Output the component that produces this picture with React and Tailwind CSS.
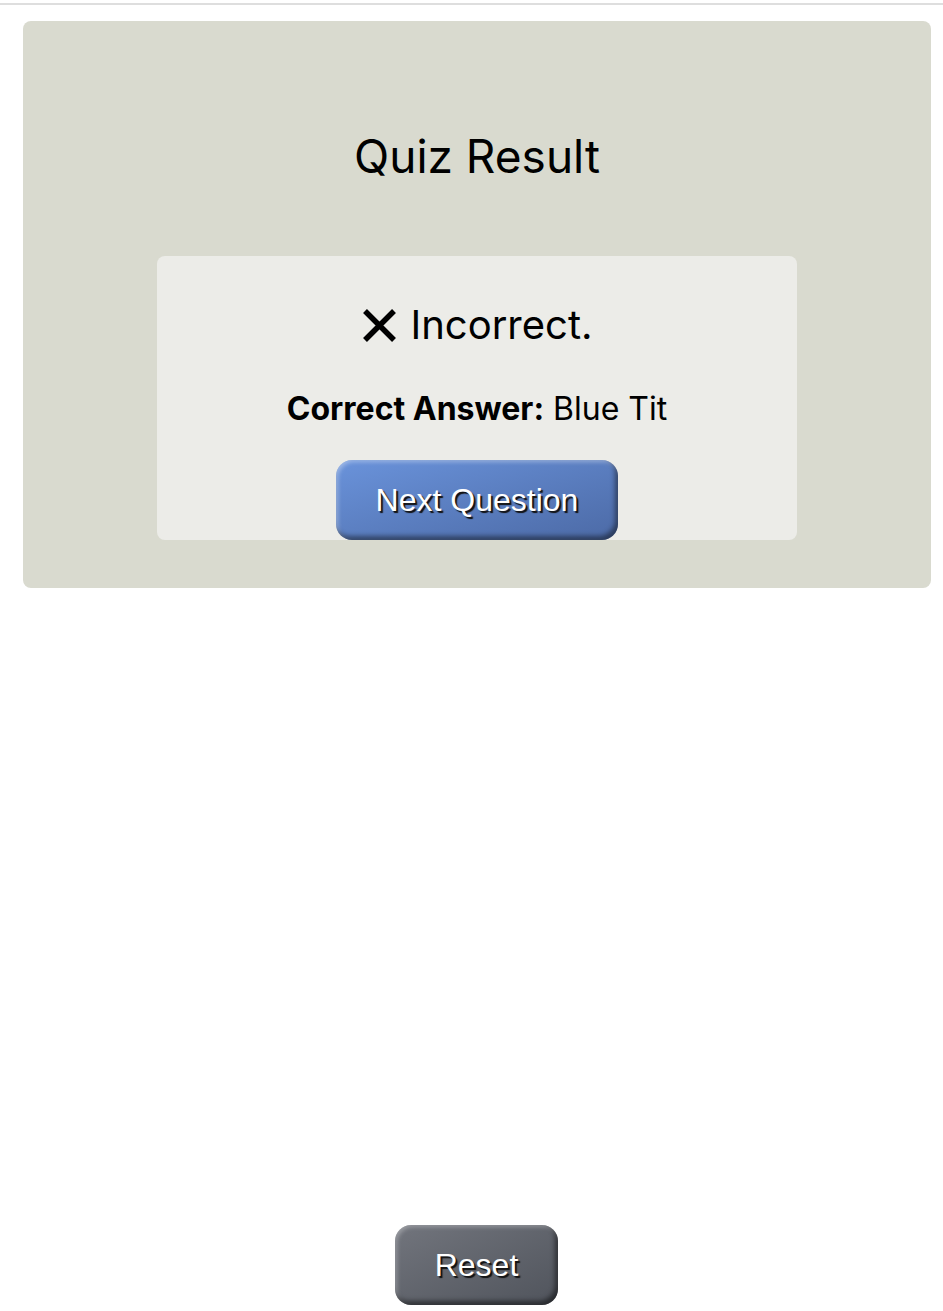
import React from "react"

const XIcon = () => (
    <svg width="37" height="37" viewBox="0 0 37 37" className="mr-[12px]">
        <path d="M4 4 L33 33 M33 4 L4 33" stroke="#000" strokeWidth="5.5" strokeLinecap="butt"/>
    </svg>
)

const App = () => {
    return (
        <div className="min-h-screen flex flex-col bg-white font-['Inter',sans-serif] text-black">
            <div className="mt-[3px] h-[2px] bg-[#dedede]"></div>
            {/*result card*/}
            <div className="ml-[23px] mt-[16px] w-[908px] h-[567px] rounded-[8px] bg-[#d9dacf] flex flex-col items-center">
                <h1 className="mt-[108px] text-[46px] leading-[54px] font-normal">Quiz Result</h1>
                <div className="mt-[73px] w-[640px] h-[284px] rounded-[8px] bg-[#ecece8] flex flex-col items-center">
                    <p className="mt-[44px] flex items-center text-[40px] leading-[50px]">
                        <XIcon/>
                        Incorrect.
                    </p>
                    <p className="mt-[39px] text-[32px] leading-[40px]">
                        <span className="font-bold">Correct Answer:</span> Blue Tit
                    </p>
                    <button
                        className="mt-[31px] w-[282px] h-[80px] rounded-[16px] bg-gradient-to-br from-[#6a93db] to-[#4c6aa6] text-white text-[32px] font-['Liberation_Sans',sans-serif] [text-shadow:2px_2px_1px_#111] shadow-[inset_-3px_-4px_5px_rgba(0,0,0,0.45),inset_2px_2px_4px_rgba(255,255,255,0.35)]"
                    >
                        Next Question
                    </button>
                </div>
            </div>
            <div className="flex-1"></div>
            {/*reset*/}
            <div className="flex justify-center pl-[10px] mb-[6px]">
                <button
                    className="w-[163px] h-[80px] rounded-[16px] bg-gradient-to-br from-[#72757d] to-[#50545c] text-white text-[32px] font-['Liberation_Sans',sans-serif] [text-shadow:2px_2px_1px_#111] shadow-[inset_-3px_-4px_5px_rgba(0,0,0,0.5),inset_2px_2px_4px_rgba(255,255,255,0.3)]"
                >
                    Reset
                </button>
            </div>
        </div>
    )
}

export default App
